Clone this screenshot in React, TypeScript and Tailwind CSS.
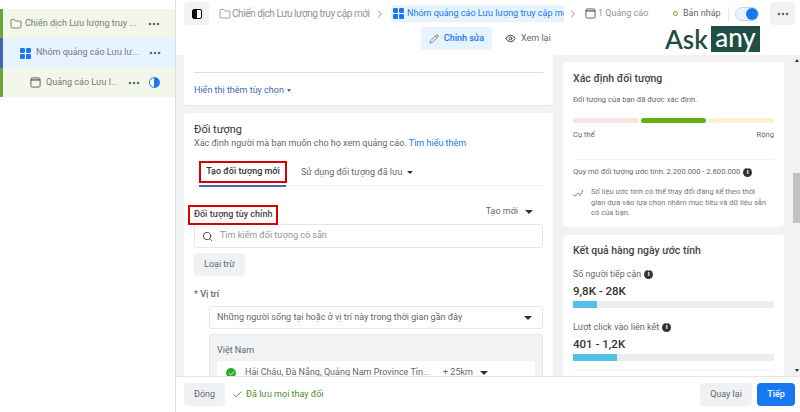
import { Check, ChevronRight, Ellipsis, Eye, Folder, Pencil, Search } from "lucide-react";

const FONT = "font-['Roboto','Liberation_Sans',sans-serif]";

function Grid({ size = 11 }: { size?: number }) {
  return (
    <svg width={size} height={size} viewBox="0 0 12 12" className="shrink-0" fill="#1877f2" aria-hidden>
      <rect x="0" y="0" width="5.4" height="5.4" rx="1.2" />
      <rect x="6.6" y="0" width="5.4" height="5.4" rx="1.2" />
      <rect x="0" y="6.6" width="5.4" height="5.4" rx="1.2" />
      <rect x="6.6" y="6.6" width="5.4" height="5.4" rx="1.2" />
    </svg>
  );
}

function AdIcon({ size = 11 }: { size?: number }) {
  return (
    <svg width={size} height={size} viewBox="0 0 12 12" className="shrink-0" fill="none" stroke="#555" strokeWidth="1" aria-hidden>
      <rect x="1" y="1" width="10" height="10" rx="1.5" />
      <path d="M1 3.2h10" strokeWidth="1.4" />
    </svg>
  );
}

function Caret() {
  return <span className="inline-block h-0 w-0 border-x-[4px] border-t-[4px] border-x-transparent border-t-[#333]" />;
}

function Dots({ className = "" }: { className?: string }) {
  return <Ellipsis size={14} strokeWidth={2.5} className={`shrink-0 text-[#606770] ${className}`} />;
}

function InfoDot() {
  return (
    <span className="inline-flex h-[9px] w-[9px] items-center justify-center rounded-full bg-[#333] text-[7px] leading-none font-bold text-white">
      i
    </span>
  );
}

function Sidebar() {
  return (
    <aside className="flex w-[176px] shrink-0 flex-col border-r border-[#dddfe2] bg-white pt-[9px] text-[9px] whitespace-nowrap text-[#777]">
      <div className="flex h-[29px] items-center border-l-[3px] border-[#6ea33f] bg-[#f2f7ea] pl-[7px]">
        <Folder size={12} strokeWidth={1.3} className="shrink-0 text-[#444]" />
        <span className="ml-[3px] w-[118px]">Chiến dịch Lưu lượng truy ...</span>
        <Dots className="ml-[4px]" />
      </div>
      <div className="flex h-[30px] items-center border-l-[3px] border-[#4267b2] bg-[#e7f3ff] pl-[17px]">
        <Grid />
        <span className="ml-[5px] w-[104px]">Nhóm quảng cáo Lưu lư...</span>
        <Dots className="ml-[8px]" />
      </div>
      <div className="flex h-[29px] items-center border-l-[3px] border-[#6ea33f] bg-[#f2f7ea] pl-[27px]">
        <AdIcon />
        <span className="ml-[5px] w-[71px]">Quảng cáo Lưu l...</span>
        <Dots className="ml-[10px]" />
        <span className="ml-[8px] h-[11px] w-[11px] rounded-full border border-[#1877f2] bg-[linear-gradient(90deg,#fff_50%,#1877f2_50%)]" />
      </div>
    </aside>
  );
}

function TopBar() {
  return (
    <header className="relative h-[55px] shrink-0 bg-white">
      <div className="flex h-[27px] items-center pl-[8px] text-[9px] text-[#8d949e]">
        <span className="flex h-[23px] w-[25px] shrink-0 items-center justify-center rounded bg-[#f2f2f2]">
          <span className="h-[10px] w-[10px] rounded-[2px] border border-black bg-[linear-gradient(90deg,#111_45%,#fff_45%)]" />
        </span>
        <Folder size={12} strokeWidth={1.1} className="ml-[10px] shrink-0 text-[#555]" />
        <span className="ml-[1px] w-[137px] shrink-0 text-[10px] tracking-[-0.42px] whitespace-nowrap">Chiến dịch Lưu lượng truy cập mới</span>
        <ChevronRight size={12} className="ml-[5px] shrink-0 text-[#8d949e]" />
        <span className="ml-[5px] flex h-[17px] w-[173px] shrink-0 items-center gap-[3px] overflow-hidden rounded-l bg-[#e7f3ff] pl-[2px] whitespace-nowrap text-[#1877f2]">
          <Grid />
          Nhóm quảng cáo Lưu lượng truy cập mới
        </span>
        <ChevronRight size={12} className="ml-[3px] shrink-0 text-[#8d949e]" />
        <span className="ml-[6px]">
          <AdIcon />
        </span>
        <span className="ml-[2px] w-[75px] shrink-0 whitespace-nowrap">1 Quảng cáo</span>
        <span className="h-[5px] w-[5px] shrink-0 rounded-full border border-[#6ea33f]" />
        <span className="ml-[5px] w-[38px] shrink-0 whitespace-nowrap text-[#606770]">Bản nháp</span>
        <span className="ml-[7px] h-[14px] w-px shrink-0 bg-[#e4e6eb]" />
        <span className="ml-[6px] flex h-[14px] w-[24px] shrink-0 items-center justify-end rounded-full border border-[#c5d9f3] bg-[#e7f3ff]">
          <span className="h-[12px] w-[12px] rounded-full bg-[#1877f2]" />
        </span>
        <span className="ml-[11px] flex h-[23px] w-[25px] shrink-0 items-center justify-center rounded bg-[#f2f2f2]">
          <Dots className="text-[#333]" />
        </span>
      </div>
      <div className="flex h-[23px] items-center pl-[245px] text-[9px]">
        <span className="flex h-[23px] w-[71px] items-center justify-center gap-[5px] rounded bg-[#e7f3ff] font-medium text-[#1877f2]">
          <Pencil size={10} strokeWidth={1.4} className="text-[#444]" />
          Chỉnh sửa
        </span>
        <span className="ml-[13px] flex items-center gap-[5px] text-[#606770]">
          <Eye size={11} className="text-[#333]" />
          Xem lại
        </span>
      </div>
      <div className="absolute top-[26px] left-[489px] flex h-[26px] items-center font-['Lato',sans-serif] text-[#1f4f45]">
        <span className="w-[46px] text-[26px] leading-none font-semibold">Ask</span>
        <span className="flex h-[26px] w-[49px] items-center justify-center bg-[#1f4f45] pb-[4px] text-[26px] leading-none font-medium text-white">
          any
        </span>
      </div>
    </header>
  );
}

function MainColumn() {
  return (
    <div className="flex w-[369px] shrink-0 flex-col gap-[8px]">
      <section className="h-[50px] shrink-0 rounded-b bg-white px-[10px] pt-[17px] shadow-[0_1px_1px_rgba(0,0,0,0.06)]">
        <div className="h-px bg-[#dddfe2]" />
        <p className="mt-[11px] flex items-center gap-[3px] text-[9px] text-[#4267b2]">
          Hiển thị thêm tùy chọn
          <span className="h-0 w-0 border-x-[2.5px] border-t-[3px] border-x-transparent border-t-[#4267b2]" />
        </p>
      </section>
      <section className="flex-1 rounded-t bg-white px-[10px] pt-[10px]">
        <h2 className="text-[11px] leading-[13px] text-[#333]">Đối tượng</h2>
        <p className="mt-[1px] text-[9px] leading-[12px] text-[#606770]">
          Xác định người mà bạn muốn cho họ xem quảng cáo. <span className="text-[#1877f2]">Tìm hiểu thêm</span>
        </p>

        <div className="mt-[12px] flex h-[25px] items-start border-b border-[#eceef0] pl-[5px] text-[9px]">
          <span className="relative h-[25px] w-[87px] shrink-0 font-medium whitespace-nowrap text-[#333]">
            <span className="flex h-[22px] w-[88px] items-center justify-center border-2 border-[#d90000]">Tạo đối tượng mới</span>
            <span className="absolute right-0 bottom-[-1px] left-0 h-[2px] bg-[#4267b2]" />
          </span>
          <span className="mt-[5px] ml-[15px] flex items-center gap-[4px] text-[#606770]">
            Sử dụng đối tượng đã lưu
            <span className="h-0 w-0 border-x-[3px] border-t-[3px] border-x-transparent border-t-[#333]" />
          </span>
        </div>

        <div className="mt-[19px] flex h-[20px] items-center justify-between text-[9px]">
          <span className="-ml-[6px] flex h-[20px] items-center border-2 border-[#d90000] px-[4px] font-medium text-[#444]">
            Đối tượng tùy chỉnh
          </span>
          <span className="mr-[10px] mb-[6px] flex items-center gap-[7px] text-[#606770]">
            Tạo mới <Caret />
          </span>
        </div>

        <div className="-mt-[1px] flex h-[24px] items-center rounded-[3px] border border-[#e4e6eb] bg-white pl-[7px] text-[9px] text-[#8d949e]">
          <Search size={11} className="text-[#444]" />
          <span className="ml-[7px]">Tìm kiếm đối tượng có sẵn</span>
        </div>
        <button className="mt-[5px] flex h-[23px] w-[51px] items-center justify-center rounded bg-[#f0f1f2] text-[9px] text-[#606770]">
          Loại trừ
        </button>

        <p className="mt-[12px] text-[9px] leading-[12px] font-medium text-[#606770]">* Vị trí</p>
        <div className="mt-[6px] ml-[15px] flex h-[23px] items-center justify-between rounded-[3px] border border-[#e4e6eb] pr-[10px] pl-[7px] text-[9px] text-[#606770]">
          Những người sống tại hoặc ở vị trí này trong thời gian gần đây
          <Caret />
        </div>
        <div className="mt-[5px] ml-[15px] rounded-t-[3px] border border-[#e4e6eb] bg-[#f2f3f5] px-[7px] pt-[8px] text-[9px] text-[#606770]">
          <p className="leading-[14px]">Việt Nam</p>
          <div className="mt-[4px] flex h-[24px] items-center rounded-t-[3px] bg-white pl-[9px] whitespace-nowrap">
            <span className="flex h-[10px] w-[10px] shrink-0 items-center justify-center rounded-full bg-[#2ea82e]">
              <Check size={7} strokeWidth={3} className="text-white" />
            </span>
            <span className="ml-[9px] w-[187px] shrink-0">Hải Châu, Đà Nẵng, Quảng Nam Province Tỉn...</span>
            <span className="ml-[11px]">+ 25km</span>
            <span className="ml-[7px]">
              <Caret />
            </span>
          </div>
        </div>
      </section>
    </div>
  );
}

function RightColumn() {
  return (
    <div className="ml-[10px] flex w-[221px] shrink-0 flex-col gap-[8px] pt-[7px]">
      <section className="h-[165px] shrink-0 rounded bg-white px-[10px] pt-[10px]">
        <h2 className="text-[10.5px] leading-[14px] font-medium text-[#444]">Xác định đối tượng</h2>
        <p className="mt-[8px] text-[7.6px] leading-[12px] text-[#606770]">Đối tượng của bạn đã được xác định.</p>
        <div className="mt-[12px] flex h-[5px] gap-[2px]">
          <span className="flex-1 rounded-full bg-[#fbe3e1]" />
          <span className="flex-1 rounded-full bg-[#62b012]" />
          <span className="flex-1 rounded-full bg-[#fdf0d2]" />
        </div>
        <div className="mt-[6px] flex justify-between text-[7.6px] leading-[12px] text-[#606770]">
          <span>Cụ thể</span>
          <span>Rộng</span>
        </div>
        <div className="mt-[18px] h-px bg-[#f2f3f5]" />
        <p className="mt-[6px] flex items-center gap-[3px] text-[7.6px] leading-[12px] text-[#606770]">
          Quy mô đối tượng ước tính: 2.200.000 - 2.600.000 <InfoDot />
        </p>
        <div className="mt-[9px] flex text-[7.6px] leading-[10.5px] text-[#777]">
          <svg width="13" height="9" viewBox="0 0 13 9" className="mt-[1px] mr-[5px] shrink-0" fill="none" stroke="#555" strokeWidth="1" aria-hidden>
            <path d="M0.5 7l2 1 2.5-3 2 2.5 3-5.5" strokeDasharray="1.5 0.6" />
          </svg>
          <p className="w-[178px]">Số liệu ước tính có thể thay đổi đáng kể theo thời gian dựa vào lựa chọn nhắm mục tiêu và dữ liệu sẵn có của bạn.</p>
        </div>
      </section>
      <section className="flex-1 rounded-t bg-white px-[10px] pt-[9px]">
        <h2 className="text-[10.5px] leading-[14px] font-medium text-[#444]">Kết quả hàng ngày ước tính</h2>
        <p className="mt-[10px] flex items-center gap-[3px] text-[8.8px] leading-[12px] text-[#606770]">
          Số người tiếp cận <InfoDot />
        </p>
        <p className="mt-[4px] text-[11.5px] leading-[14px] font-medium text-[#333]">9,8K - 28K</p>
        <div className="mt-[3px] h-[7px] bg-[#ebedf0]">
          <div className="h-full w-[12%] bg-[#53c0e8]" />
        </div>
        <p className="mt-[13px] flex items-center gap-[3px] text-[9px] leading-[12px] text-[#606770]">
          Lượt click vào liên kết <InfoDot />
        </p>
        <p className="mt-[4px] text-[11.5px] leading-[14px] font-medium text-[#333]">401 - 1,2K</p>
        <div className="mt-[3px] h-[7px] bg-[#ebedf0]">
          <div className="h-full w-[22%] bg-[#53c0e8]" />
        </div>
        <div className="mt-[9px] h-px bg-[#f2f3f5]" />
      </section>
    </div>
  );
}

function Scrollbar() {
  return (
    <div className="ml-auto flex w-[7px] shrink-0 flex-col items-center bg-[#f2f2f2]">
      <span className="mt-[4px] h-0 w-0 border-x-[2.5px] border-b-[3px] border-x-transparent border-b-[#333]" />
      <span className="mt-[111px] h-[50px] w-full bg-[#c1c1c1]" />
      <span className="mt-auto mb-[4px] h-0 w-0 border-x-[2.5px] border-t-[3px] border-x-transparent border-t-[#333]" />
    </div>
  );
}

function Footer() {
  return (
    <footer className="flex h-[36px] shrink-0 items-center border-t border-[#e4e6eb] bg-white pr-[5px] pl-[8px] text-[9px]">
      <button className="flex h-[23px] w-[41px] items-center justify-center rounded bg-[#f0f1f2] text-[#606770]">Đóng</button>
      <Check size={11} className="ml-[7px] text-[#4e8a2e]" />
      <span className="ml-[3px] text-[#4e8a2e]">Đã lưu mọi thay đổi</span>
      <button className="ml-auto flex h-[23px] w-[52px] items-center justify-center rounded bg-[#f0f1f2] text-[#606770]">Quay lại</button>
      <button className="ml-[5px] flex h-[23px] w-[38px] items-center justify-center rounded bg-[#1877f2] font-medium text-white">Tiếp</button>
    </footer>
  );
}

export default function App() {
  return (
    <div className={`flex h-[412px] w-[800px] overflow-hidden bg-white ${FONT}`}>
      <Sidebar />
      <div className="flex min-w-0 flex-1 flex-col">
        <TopBar />
        <div className="flex min-h-0 flex-1 overflow-hidden bg-[#f2f2f2] pl-[8px]">
          <MainColumn />
          <RightColumn />
          <Scrollbar />
        </div>
        <Footer />
      </div>
    </div>
  );
}
